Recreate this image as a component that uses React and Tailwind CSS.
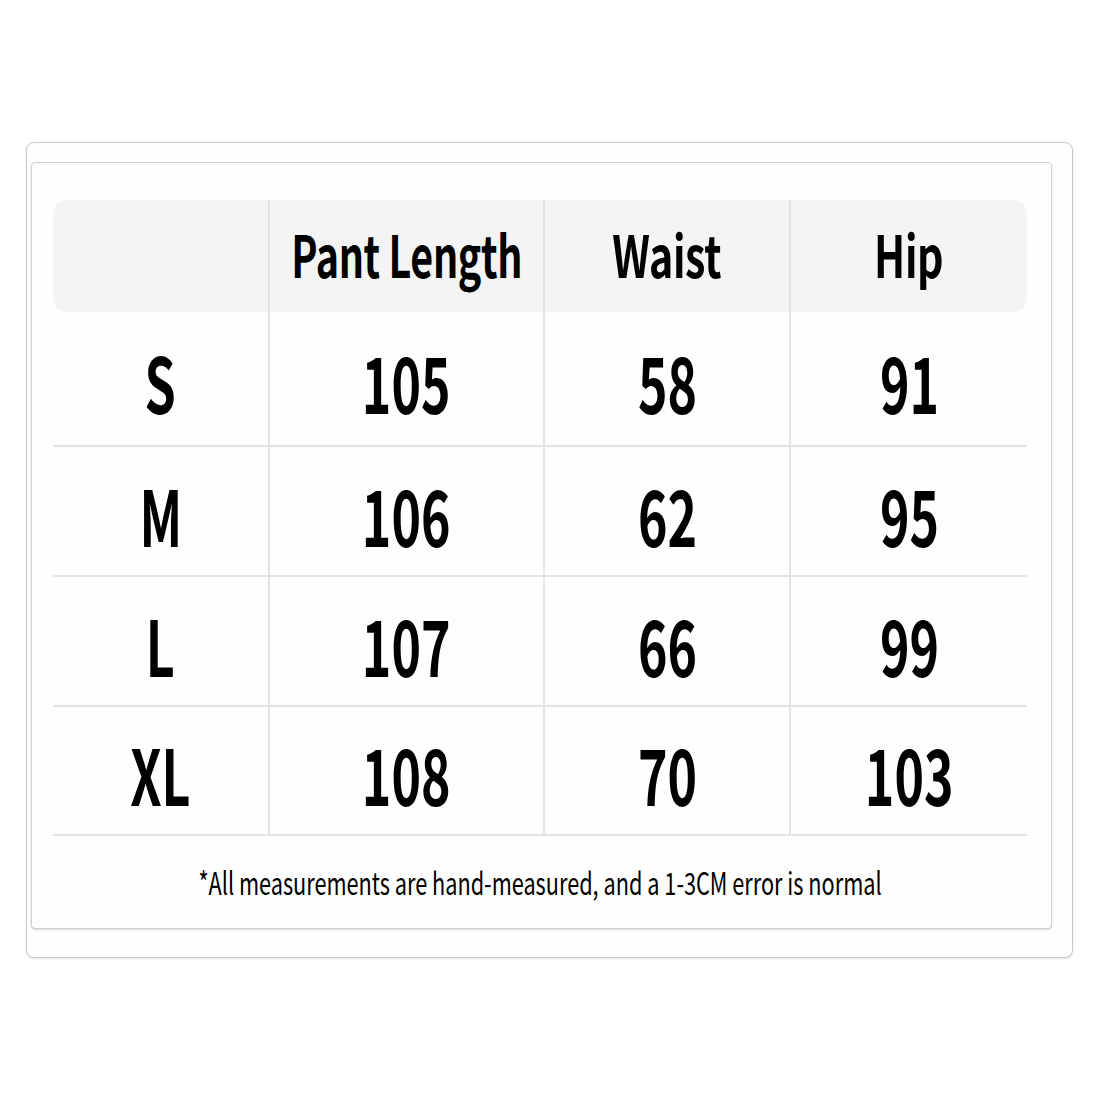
import React from "react";

const font = { fontFamily: '"Noto Sans CJK SC", "Noto Sans", sans-serif' };

const rows = [
  { size: "S", vals: ["105", "58", "91"], h: "h-[135px]" },
  { size: "M", vals: ["106", "62", "95"], h: "h-[130px]" },
  { size: "L", vals: ["107", "66", "99"], h: "h-[130px]" },
  { size: "XL", vals: ["108", "70", "103"], h: "h-[129px]" },
];

function Txt({ children, cls }) {
  return <span className={"inline-block origin-center whitespace-nowrap " + cls}>{children}</span>;
}

const head = "text-[58px] font-bold leading-none scale-x-[0.71] tracking-[-0.5px]";
const headLong = "text-[58px] font-bold leading-none scale-x-[0.68] tracking-[-0.5px]";
const num = "text-[77px] font-bold leading-none scale-x-[0.65]";

export default function App() {
  return (
    <div className="w-[1100px] h-[1100px] bg-white pt-[142px] pl-[26px]" style={font}>
      <div className="w-[1047px] h-[816px] rounded-[8px] border-[1.5px] border-[#c9c9c9] bg-[#fefefe] shadow-[0_1px_2px_rgba(0,0,0,0.12)] pt-[19px] pl-[4px]">
        <div className="w-[1021px] h-[767px] rounded-[4px] border-[1.5px] border-[#cfcfcf] bg-[#fefefe] shadow-[0_1px_2px_rgba(0,0,0,0.15)] pt-[37px] pl-[21px] flex flex-col">
          <div className="grid grid-cols-[215px_275px_246px_238px] text-black">
            <div className="h-[112px] bg-[#f4f4f4] rounded-l-[14px]" />
            <div className="h-[112px] bg-[#f4f4f4] border-l-2 border-[#e2e2e2] flex items-center justify-center pb-[6px]">
              <Txt cls={headLong}>Pant Length</Txt>
            </div>
            <div className="h-[112px] bg-[#f4f4f4] border-l-2 border-[#e2e2e2] flex items-center justify-center pb-[6px]">
              <Txt cls={head}>Waist</Txt>
            </div>
            <div className="h-[112px] bg-[#f4f4f4] border-l-2 border-[#e2e2e2] rounded-r-[14px] flex items-center justify-center pb-[6px]">
              <Txt cls={head}>Hip</Txt>
            </div>
            {rows.map((r) => (
              <React.Fragment key={r.size}>
                <div className={r.h + " border-b-2 border-[#e4e4e4] flex items-center justify-center pt-[4px]"}>
                  <Txt cls={num}>{r.size}</Txt>
                </div>
                {r.vals.map((v, i) => (
                  <div
                    key={i}
                    className={r.h + " border-b-2 border-l-2 border-[#e4e4e4] flex items-center justify-center pt-[4px]"}
                  >
                    <Txt cls={num}>{v}</Txt>
                  </div>
                ))}
              </React.Fragment>
            ))}
          </div>
          <div className="w-[974px] flex justify-center pt-[30px]">
            <Txt cls="text-[31px] leading-none scale-x-[0.70] text-black">
              *All measurements are hand-measured, and a 1-3CM error is normal
            </Txt>
          </div>
        </div>
      </div>
    </div>
  );
}
